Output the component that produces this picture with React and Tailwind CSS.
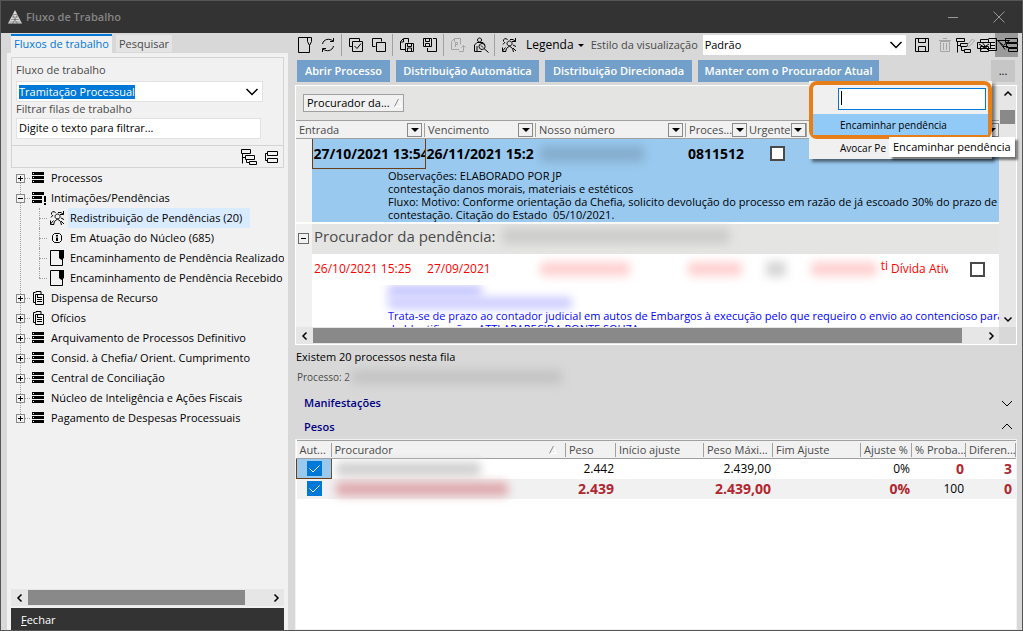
import { useState } from 'react'

const TREE = [
  { label: 'Processos', icon: 'stack' },
  {
    label: 'Intimações/Pendências',
    icon: 'alert',
    open: true,
    children: [
      { label: 'Redistribuição de Pendências (20)', icon: 'people', selected: true },
      { label: 'Em Atuação do Núcleo (685)', icon: 'info' },
      { label: 'Encaminhamento de Pendência Realizado', icon: 'note' },
      { label: 'Encaminhamento de Pendência Recebido', icon: 'note' },
    ],
  },
  { label: 'Dispensa de Recurso', icon: 'docs' },
  { label: 'Ofícios', icon: 'docs' },
  { label: 'Arquivamento de Processos Definitivo', icon: 'stack' },
  { label: 'Consid. à Chefia/ Orient. Cumprimento', icon: 'stack' },
  { label: 'Central de Conciliação', icon: 'stack' },
  { label: 'Núcleo de Inteligência e Ações Fiscais', icon: 'stack' },
  { label: 'Pagamento de Despesas Processuais', icon: 'stack' },
]

const ACTIONS = [
  { label: 'Abrir Processo', width: 'w-[93px]' },
  { label: 'Distribuição Automática', width: 'w-[143px]' },
  { label: 'Distribuição Direcionada', width: 'w-[147px]' },
  { label: 'Manter com o Procurador Atual', width: 'w-[181px]' },
]

// 16x16 glyphs, stroked with the current colour
const GLYPHS = {
  stack: (
    <g fill="currentColor" stroke="none">
      <path d="M2 2h12v3H2zM2 6h12v3H2zM2 10h12v3H2z" />
      <path d="M3 3h1v1H3zM3 7h1v1H3zM3 11h1v1H3z" fill="#f1f1f1" />
    </g>
  ),
  alert: (
    <g fill="currentColor" stroke="none">
      <path d="M2 2h12v3H2zM2 6h10v3H2zM2 10h10v3H2z" />
      <path d="M3 3h1v1H3zM3 7h1v1H3zM3 11h1v1H3z" fill="#f1f1f1" />
      <path d="M14 6h2v6h-2zM14 13h2v2h-2z" />
    </g>
  ),
  people: <path d="M8.500 9a2.500 2.500 0 1 1 .1 0M4.500 15l1-3.500 3-2.500 3 2.500 1 3.500M2 7.500L4 5M2.500 4.500a2 2 0 0 1 4-1.500M9 2.500h3l2.500 2M14.500 1v3.500H11M12 8l3 1.500M1.500 10.500v4H5M1.500 14l3-3.500M12 11l3 3" />,
  info: (
    <>
      <path d="M5.500 3.500h5l2 2v5l-2 2h-5l-2-2v-5z" />
      <path d="M7 5h2v1.500H7zM7 7.500h2V11H7z" fill="currentColor" stroke="none" />
    </>
  ),
  note: (
    <>
      <path d="M1.500.5h12v15h-12z" />
      <path d="M10 0h5v8l-2.500 2L10 8z" fill="currentColor" stroke="none" />
    </>
  ),
  docs: <path d="M5.500 4.500h8v10h-8zM5.500 12.500h-2v-10h2M6 2.500V1.500h5v3M7 7.500h5M7 9.500h5M7 11.500h5M7.500 5v2" />,
  page: <path d="M1.500.5h13v4l-2 4-2-4v-4M1.500.5v15h11v-7" />,
  refresh: <path d="M2.500 7c1-5 7-6 10.500-3M13.500 1v3.500H10M13.500 9c-1 5-7 6-10.500 3M2.500 15v-3.500H6" />,
  checkAll: <path d="M4.500 9.500h-3v-8h10v3M4.500 4.500h10v10h-10zM6.500 9l2.500 2.500L13 6.500" />,
  copy: <path d="M4.500 9.500h-3v-8h9v3M5.500 5.500h9v9h-9z" />,
  docSave: <path d="M6 12.500H1.500v-8l3-3h5v4M4.500 2v3h-3M6.500 6.500h8v8h-8zM8.500 6.500v3h4v-3M8.500 14v-3h4v3" />,
  saveDoc: <path d="M1.500 1.500h8v8h-8zM3.500 1.500v3h4v-3M3.500 9V6.500h4V9M11 1.500h3.500v13h-9V11" />,
  docUp: <path d="M9 12.500H1.500v-8l3-3h6v6M4.500 2v3M5.500 10V5.500h2v2h-2M9 14.500h4.500v-6M11.500 10.500l2-2 2 2" />,
  userSearch: <path d="M6.500 5a2 2 0 1 1 .1 0M1.500 14.500V8L4 5.500h6L12 8M1.500 14.500h7M4 9v5M9 12.500a3 3 0 1 1 .1 0M8 8.500l2 2M11 11.500l4.500 4" />,
  save: <path d="M1.500 1.500h13v13h-13zM4.500 1.500v4h7v-4M4.500 14.500v-5h7v5" />,
  trash: <path d="M3.500 4.500h9v10h-9zM2 3.500h12M6 1.500h4M6.500 6v7M9.500 6v7" />,
  treeEdit: (
    <>
      <path d="M.5 1.500h8v3h-8zM4.500 6.500h7v3h-7zM8.500 12.500h6v3h-6zM1.500 4.500v11M1.500 8.500h3M5.500 9.500v4h3" />
      <path d="M10.500 9l6-7 2 2-6 6z" stroke="#a5a5a5" />
    </>
  ),
  tree: <path d="M.5.500h9v4h-9zM4.500 6.500h9v4h-9zM8.500 12.500h7v3h-7zM1.500 4.500v10M1.500 8.500h3M5.500 10.500v3h3" />,
  boxes: <path d="M4.500 2.500h10v4h-10zM4.500 9.500h10v4h-10zM4 4.500H2.500v7H4" />,
  print: <path d="M1.500 5V2.500h8V5M-1.500 5.500h13v6h-13zM1.500 9.500h8v5h-8zM0 7l10 6M10 7L1 13M3 5l6 8M9.500 1.500h8v12h-8M11 5.500h5M11 8.500h5M11 11.500h5" />,
  window: <path d="M6.500 1.500h12v4h-12zM7.500 6.500h11v4h-11zM9.500 11.500h9v3h-9zM-1.500 3.500h12l-6 5zM1 6l5 6.500M4 9.500h5" />,
  down: <path d="M2.500 5l5.500 5.500L13.500 5" strokeWidth="1.500" />,
  thinDown: <path d="M3 6l5 5 5-5" />,
  thinUp: <path d="M3 10l5-5 5 5" />,
  smallUp: <path d="M4.500 9.500L8 6l3.500 3.500" strokeWidth="1.500" />,
  smallDown: <path d="M4.500 6.500L8 10l3.500-3.500" strokeWidth="1.500" />,
  left: <path d="M9.500 4.500L6 8l3.500 3.500" strokeWidth="1.500" />,
  right: <path d="M6.500 4.500L10 8l-3.500 3.500" strokeWidth="1.500" />,
}

function Icon({ name, className = '' }) {
  return (
    <svg viewBox="0 0 16 16" aria-hidden="true" className={`size-4 shrink-0 overflow-visible fill-none stroke-current ${className}`}>
      {GLYPHS[name]}
    </svg>
  )
}

function ToolButton({ icon, label, className = '' }) {
  return (
    <button aria-label={label} className={`flex h-6 w-[23px] shrink-0 items-center justify-center ${className}`}>
      <Icon name={icon} />
    </button>
  )
}

function Separator() {
  return <span className="mx-0.5 h-[22px] w-px shrink-0 bg-[#a0a0a0]" />
}

function FilterButton({ label }) {
  return (
    <button aria-label={`Filtrar ${label}`} className="flex h-3.5 w-[15px] shrink-0 items-center justify-center border border-[#8a8a8a] bg-[#f1f1f1]">
      <span className="border-x-4 border-t-4 border-x-transparent border-t-black" />
    </button>
  )
}

function SortMark() {
  return (
    <svg viewBox="0 0 8 8" aria-hidden="true" className="size-2 shrink-0 fill-none">
      <path d="M4.500 0l3 7.500h-7" stroke="#fff" />
      <path d="M.5 7.500l4-7.500" stroke="#8a8a8a" />
    </svg>
  )
}

function Expander({ open }) {
  return (
    <button aria-label={open ? 'Recolher' : 'Expandir'} className="relative flex size-[9px] shrink-0 items-center justify-center border border-[#8a8a8a] bg-[#f1f1f1]">
      <span className="h-px w-[5px] bg-black" />
      {!open && <span className="absolute h-[5px] w-px bg-black" />}
    </button>
  )
}

// Text that is hidden from the reader behind a smudge
function Redacted({ className }) {
  return <span aria-hidden="true" className={`block rounded blur-[5px] ${className}`} />
}

function TreeItem({ item }) {
  return (
    <li>
      <div className="flex h-5 items-center whitespace-nowrap">
        <Expander open={item.open} />
        <span className="w-[5px] shrink-0 border-t border-dotted border-[#a0a0a0]" />
        <Icon name={item.icon} />
        <span className="ml-[5px]">{item.label}</span>
      </div>
      {item.children && (
        <ul className="ml-[23px]">
          {item.children.map((child, i) => (
            <li key={child.label} className="relative flex h-5 items-center whitespace-nowrap">
              <span className={`absolute left-0 top-0 w-px border-l border-dotted border-[#a0a0a0] ${i === item.children.length - 1 ? 'h-2.5' : 'h-5'}`} />
              <span className="mr-0.5 w-2 shrink-0 border-t border-dotted border-[#a0a0a0]" />
              <Icon name={child.icon} />
              <span className={`ml-[3px] px-0.5 leading-5 ${child.selected ? 'bg-[#d9ebff] pr-2' : ''}`}>{child.label}</span>
            </li>
          ))}
        </ul>
      )}
    </li>
  )
}

function HorizontalScroll({ thumb }) {
  return (
    <div className="flex h-[17px] shrink-0 items-center bg-[#e6e6e6]">
      <button aria-label="Rolar para a esquerda" className="flex w-[17px] shrink-0 justify-center"><Icon name="left" /></button>
      <div className="flex-1"><div className={`h-[15px] bg-[#898989] ${thumb}`} /></div>
      <button aria-label="Rolar para a direita" className="flex w-[17px] shrink-0 justify-center"><Icon name="right" /></button>
    </div>
  )
}

function TitleBar() {
  return (
    <header className="flex h-8 shrink-0 items-center bg-[#333] text-[#858585]">
      <svg viewBox="0 0 14 14" aria-hidden="true" className="ml-[7px] size-3.5">
        <path d="M7 0l7 13.500H0z" fill="#d8d8d8" />
        <path d="M5 4.500h4M4 7h6M3 9.500h8M1.500 12h11M4.500 5l5 9M9.500 5l-5 9" stroke="#333" strokeWidth=".4" fill="none" />
      </svg>
      <h1 className="ml-1 flex-1 font-semibold">Fluxo de Trabalho</h1>
      <button aria-label="Minimizar" className="flex h-8 w-[46px] items-center justify-center"><span className="h-px w-2.5 bg-[#999]" /></button>
      <button aria-label="Fechar janela" className="flex h-8 w-[46px] items-center justify-center">
        <svg viewBox="0 0 12 12" className="size-3 stroke-[#999]"><path d="M.5.500l11 11M11.500.500l-11 11" /></svg>
      </button>
    </header>
  )
}

function Sidebar() {
  return (
    <aside className="ml-1.5 flex w-[281px] shrink-0 flex-col pt-px">
      <div className="flex items-end gap-1 pl-1 text-[#4a4a4a]">
        <button className="h-[19px] w-[101px] whitespace-nowrap border-t-2 border-[#0078d7] bg-[#f1f1f1] pb-0.5 leading-[14px] text-[#0078d7]">Fluxos de trabalho</button>
        <button className="mb-px h-[17px] w-14 bg-[#e4e4e4] leading-[17px]">Pesquisar</button>
      </div>
      <div className="flex min-h-0 flex-1 flex-col bg-[#f1f1f1] px-1 pt-1">
        <div className="flex flex-col border border-[#d4d4d4] pb-1.5 pl-1 pr-5 pt-1 text-[#4a4a4a]">
          <label htmlFor="fluxo" className="leading-4">Fluxo de trabalho</label>
          <div className="relative mt-[3px] h-[21px] border border-[#e2e2e2] bg-white">
            <select id="fluxo" className="absolute inset-0 w-full appearance-none opacity-0">
              <option>Tramitação Processual</option>
            </select>
            <div className="pointer-events-none flex h-full items-center justify-between px-0.5">
              <span className="bg-[#0078d7] leading-[14px] text-white">Tramitação Processual</span>
              <Icon name="down" className="text-black" />
            </div>
          </div>
          <label htmlFor="filtro" className="mb-0.5 leading-[14px]">Filtrar filas de trabalho</label>
          <input id="filtro" defaultValue="Digite o texto para filtrar..." className="mr-0.5 h-[21px] border border-[#e2e2e2] bg-white px-0.5 pb-0.5 text-black" />
        </div>
        <div className="flex h-[22px] items-center justify-end gap-1.5 border border-t-0 border-[#d4d4d4] pr-1">
          <button aria-label="Expandir filas"><Icon name="tree" /></button>
          <button aria-label="Recolher filas"><Icon name="boxes" /></button>
        </div>
        <nav className="min-h-0 flex-1 overflow-hidden pl-[5px]">
          <ul className="relative">
            <li aria-hidden="true" className="absolute bottom-2.5 left-1 top-2.5 border-l border-dotted border-[#a0a0a0]" />
            {TREE.map(item => <TreeItem key={item.label} item={item} />)}
          </ul>
        </nav>
        <HorizontalScroll thumb="w-[91%]" />
        <button className="mt-0.5 h-[22px] shrink-0 bg-[#333] px-2.5 pt-0.5 text-left font-medium text-white"><u>F</u>echar</button>
      </div>
    </aside>
  )
}

function Toolbar() {
  return (
    <div className="-ml-0.5 -mr-px flex h-6 shrink-0 items-center">
      <ToolButton icon="page" label="Novo" />
      <ToolButton icon="refresh" label="Atualizar" />
      <Separator />
      <ToolButton icon="checkAll" label="Marcar todos" />
      <ToolButton icon="copy" label="Desmarcar todos" />
      <Separator />
      <ToolButton icon="docSave" label="Salvar documento" />
      <ToolButton icon="saveDoc" label="Exportar" />
      <Separator />
      <ToolButton icon="docUp" label="Enviar" className="text-[#a5a5a5]" />
      <ToolButton icon="userSearch" label="Localizar procurador" />
      <Separator />
      <ToolButton icon="people" label="Redistribuir" />
      <button className="ml-1.5 flex shrink-0 items-center gap-1 text-[12px]">
        Legenda
        <span className="border-x-[3px] border-t-[3px] border-x-transparent border-t-black" />
      </button>
      <label htmlFor="estilo" className="ml-[7px] w-[111px] shrink-0 whitespace-nowrap text-[#4a4a4a]">Estilo da visualização</label>
      <div className="relative ml-px h-5 flex-1 bg-white">
        <select id="estilo" className="h-5 w-full appearance-none px-0.5">
          <option>Padrão</option>
        </select>
        <Icon name="down" className="pointer-events-none absolute right-0.5 top-0.5" />
      </div>
      <ToolButton icon="save" label="Salvar estilo" className="ml-1" />
      <ToolButton icon="trash" label="Excluir estilo" className="text-[#a5a5a5]" />
      <ToolButton icon="treeEdit" label="Editar estilo" className="-ml-1" />
      <ToolButton icon="print" label="Imprimir" className="z-10" />
      <ToolButton icon="window" label="Visualizar" className="-ml-[3px] bg-[#9a9a9a]" />
    </div>
  )
}

function ActionMenu() {
  return (
    <div className="absolute right-6 top-[-5px] z-10 w-[183px] bg-[#f0f0f0] pb-0.5 shadow-[3px_3px_3px_rgba(0,0,0,0.5)]">
      <div className="relative rounded-lg border-4 border-[#e67e1a]">
        <input aria-label="Procurar ação" className="ml-[25px] mt-[3px] block h-[22px] w-[148px] border border-[#0078d7] bg-white px-0.5 caret-transparent outline-none" />
        <span aria-hidden="true" className="absolute left-7 top-1.5 h-3.5 w-px bg-black" />
        <button className="mt-1 block h-[21px] w-full bg-[#91c9f7] pl-[27px] text-left text-[10px]">Encaminhar pendência</button>
      </div>
      <button className="block h-[18px] w-full pl-[31px] text-left text-[10px]">Avocar Pe</button>
      <div role="tooltip" className="absolute left-[80px] top-[56px] whitespace-nowrap bg-white px-1 leading-5 shadow-[3px_3px_2px_rgba(0,0,0,0.5)]">
        Encaminhar pendência
      </div>
    </div>
  )
}

function HeadCell({ label, span, last }) {
  return (
    <th colSpan={span} className="h-[18px] border-y border-[#a0a0a0] p-0 font-normal">
      <div className={`flex h-3.5 items-center justify-between pl-[3px] ${last ? '' : 'border-r border-[#a0a0a0] pr-0.5'}`}>
        <span className="whitespace-nowrap">{label}</span>
        <FilterButton label={label || 'coluna'} />
      </div>
    </th>
  )
}

function PendingGrid() {
  const [urgent, setUrgent] = useState(false)
  const box = 'block size-[15px] appearance-none border-2 border-[#4a4a4a] bg-white'

  return (
    <section className="relative mt-[3px] shrink-0 border border-white bg-[#f1f1f1]">
      <div className="flex">
        <div className="h-[241px] min-w-0 flex-1 overflow-hidden">
          <div className="flex h-[34px] items-center bg-[#e4e4e2] pl-[7px]">
            <button className="flex h-[18px] w-[101px] items-center gap-1 whitespace-nowrap border border-[#a0a0a0] bg-[#f1f1f1] px-[3px]">
              Procurador da... <SortMark />
            </button>
          </div>
          <table className="w-full table-fixed border-collapse text-left">
            <colgroup>
              <col className="w-4" />
              <col className="w-[113px]" />
              <col className="w-[111px]" />
              <col className="w-[150px]" />
              <col className="w-[60px]" />
              <col className="w-[61px]" />
              <col className="w-[81px]" />
              <col className="w-[62px]" />
              <col />
            </colgroup>
            <thead className="text-[#4a4a4a]">
              <tr>
                <HeadCell label="Entrada" span={2} />
                <HeadCell label="Vencimento" />
                <HeadCell label="Nosso número" />
                <HeadCell label="Proces..." />
                <HeadCell label="Urgente" />
                <HeadCell label="" />
                <HeadCell label="" />
                <HeadCell label="" last />
              </tr>
            </thead>
            <tbody>
              <tr className="h-[30px] bg-[#99c9ef] text-[14px] font-bold">
                <td className="bg-[#f1f1f1]" />
                <td className="overflow-hidden whitespace-nowrap border border-[#6b3e1a] p-0 pl-px">27/10/2021 13:54</td>
                <td className="overflow-hidden whitespace-nowrap p-0 pl-px">26/11/2021 15:2</td>
                <td className="p-0"><Redacted className="ml-1 h-4 w-[104px] bg-[#85adcd]" /></td>
                <td className="overflow-hidden p-0 pl-0.5">0811512</td>
                <td className="p-0 pl-6"><input type="checkbox" aria-label="Urgente" className={box} /></td>
                <td colSpan={3} />
              </tr>
              <tr className="bg-[#99c9ef]">
                <td className="bg-[#f1f1f1]" />
                <td colSpan={8} className="h-[54px] overflow-hidden whitespace-pre p-0 pl-[76px] align-top leading-[13px]">
                  {'Observações: ELABORADO POR JP\ncontestação danos morais, materiais e estéticos\nFluxo: Motivo: Conforme orientação da Chefia, solicito devolução do processo em razão de já escoado 30% do prazo de\ncontestação. Citação do Estado  05/10/2021.'}
                </td>
              </tr>
              <tr className="border-t-2 border-white bg-[#e4e4e2] text-[15px] text-[#4a4a4a]">
                <td className="bg-[#f1f1f1] p-0 pl-0.5">
                  <button aria-label="Recolher grupo" className="flex size-[11px] items-center justify-center border border-[#6a6a6a]"><span className="h-px w-[5px] bg-black" /></button>
                </td>
                <td colSpan={8} className="h-[31px] p-0 align-top">
                  <div className="flex h-6 items-center gap-1.5 pl-0.5">
                    Procurador da pendência: <Redacted className="h-4 w-[228px] bg-[#cdcdcb]" />
                  </div>
                </td>
              </tr>
              <tr className="h-[31px] bg-white text-[12px] text-[#f00]">
                <td className="bg-[#f1f1f1]" />
                <td className="whitespace-nowrap p-0 pl-0.5">26/10/2021 15:25</td>
                <td className="p-0 pl-0.5">27/09/2021</td>
                <td className="p-0"><Redacted className="ml-1 h-3.5 w-[90px] bg-[#ffd0d0]" /></td>
                <td className="p-0"><Redacted className="ml-0.5 h-3.5 w-[54px] bg-[#ffd0d0]" /></td>
                <td className="p-0"><Redacted className="ml-5 h-4 w-5 bg-[#d6d6d6]" /></td>
                <td className="p-0"><div className="flex justify-between"><Redacted className="ml-1 h-3.5 w-[66px] bg-[#ffd0d0]" /><span className="leading-2">ti</span></div></td>
                <td className="overflow-hidden whitespace-nowrap p-0 pl-[3px]"><div className="w-[57px] overflow-hidden">Dívida Ativa</div></td>
                <td className="p-0 pl-5"><input type="checkbox" aria-label="Selecionar" className={box} checked={urgent} onChange={e => setUrgent(e.target.checked)} /></td>
              </tr>
              <tr className="bg-white text-[#00f]">
                <td className="bg-[#f1f1f1]" />
                <td colSpan={8} className="h-[60px] overflow-hidden whitespace-nowrap p-0 pl-[76px] align-top leading-[13px]">
                  <Redacted className="h-3 w-[94px] bg-[#c4c4ff]" />
                  <Redacted className="h-3 w-[184px] bg-[#ccccff]" />
                  <p>Trata-se de prazo ao contador judicial em autos de Embargos à execução pelo que requeiro o envio ao contencioso para</p>
                  <p>da Identificação - ATTI APARECIDA PONTE SOUZA</p>
                </td>
              </tr>
            </tbody>
          </table>
        </div>
        <div className="flex w-[17px] shrink-0 flex-col items-center bg-[#e6e6e6]">
          <button aria-label="Rolar para cima" className="flex h-6 items-start"><Icon name="smallUp" /></button>
          <div className="h-3.5 w-[15px] bg-[#898989]" />
          <button aria-label="Rolar para baixo" className="mt-auto"><Icon name="smallDown" /></button>
        </div>
      </div>
      <div className="flex">
        <div className="flex-1"><HorizontalScroll thumb="w-[97%]" /></div>
        <span className="w-[17px] bg-[#d8d8d8]" />
      </div>
      <ActionMenu />
    </section>
  )
}

function WeightsTable() {
  const th = 'h-[18px] border-y border-[#a0a0a0] p-0 font-normal'
  const thInner = 'overflow-hidden whitespace-nowrap border-r border-[#a0a0a0] pl-[3px] leading-[14px]'
  const red = 'text-[14px] font-bold text-[#b0272f]'
  return (
    <div className="min-h-0 flex-1 border border-[#f1f1f1] bg-white">
      <table className="w-full table-fixed border-collapse">
        <colgroup>
          <col className="w-[35px]" />
          <col />
          <col className="w-[50px]" />
          <col className="w-[88px]" />
          <col className="w-[69px]" />
          <col className="w-[88px]" />
          <col className="w-[51px]" />
          <col className="w-[54px]" />
          <col className="w-[50px]" />
        </colgroup>
        <thead className="bg-[#f1f1f1] text-left text-[#4a4a4a]">
          <tr>
            <th className={th}><div className={thInner}>Aut...</div></th>
            <th className={th}><div className={`${thInner} flex items-center justify-between pr-2`}>Procurador <SortMark /></div></th>
            <th className={th}><div className={thInner}>Peso</div></th>
            <th className={th}><div className={thInner}>Início ajuste</div></th>
            <th className={th}><div className={thInner}>Peso Máxi...</div></th>
            <th className={th}><div className={thInner}>Fim Ajuste</div></th>
            <th className={th}><div className={thInner}>Ajuste %</div></th>
            <th className={th}><div className={thInner}>% Proba...</div></th>
            <th className={th}><div className={thInner}>Diferen...</div></th>
          </tr>
        </thead>
        <tbody className="text-right text-[12px]">
          <tr className="h-5">
            <td className="border border-[#6b3e1a] bg-[#99c9ef] p-0"><Tick /></td>
            <td className="p-0"><Redacted className="ml-1 h-3.5 w-[145px] bg-[#d0d0d0]" /></td>
            <td className="p-0 pr-0.5">2.442</td>
            <td />
            <td className="p-0 pr-0.5">2.439,00</td>
            <td />
            <td className="p-0 pr-0.5">0%</td>
            <td className={`p-0 pr-0.5 ${red}`}>0</td>
            <td className={`p-0 pr-1 ${red}`}>3</td>
          </tr>
          <tr className={`h-5 bg-[#f1f1f1] leading-5 ${red}`}>
            <td className="p-0"><Tick /></td>
            <td className="p-0"><Redacted className="ml-1 h-3.5 w-[172px] bg-[#dfa9ad]" /></td>
            <td className="p-0 pr-0.5">2.439</td>
            <td />
            <td className="p-0 pr-0.5">2.439,00</td>
            <td />
            <td className="p-0 pr-0.5">0%</td>
            <td className="p-0 pr-0.5 text-[12px] font-normal text-black">100</td>
            <td className="p-0 pr-1">0</td>
          </tr>
        </tbody>
      </table>
    </div>
  )
}

function Tick() {
  const [on, setOn] = useState(true)
  return (
    <label className="relative mx-auto block size-[15px] bg-[#0078d7]">
      <input type="checkbox" aria-label="Automático" checked={on} onChange={() => setOn(!on)} className="absolute inset-0 appearance-none" />
      {on && <svg viewBox="0 0 15 15" className="pointer-events-none block size-[15px] fill-none stroke-white"><path d="M2.500 7.500l3.500 3.500 6.500-6.500" /></svg>}
    </label>
  )
}

function SectionHead({ label, open }) {
  return (
    <button className="flex h-6 shrink-0 items-center justify-between pl-[9px] pr-0.5 font-semibold text-[#000080]">
      {label}
      <Icon name={open ? 'thinUp' : 'thinDown'} className="text-black" />
    </button>
  )
}

export default function App() {
  return (
    <div className="flex h-screen flex-col overflow-hidden border border-[#555] bg-[#d8d8d8] font-['Open_Sans','Noto_Sans',sans-serif] text-[11px] leading-4 text-black">
      <TitleBar />
      <div className="flex min-h-0 flex-1">
        <Sidebar />
        <main className="ml-[7px] mr-[5px] flex min-w-0 flex-1 flex-col">
          <Toolbar />
          <div className="mt-[3px] flex shrink-0 gap-1.5 pl-0.5 pr-0.5">
            {ACTIONS.map(a => (
              <button key={a.label} className={`h-[22px] whitespace-nowrap bg-[#739fcb] text-center font-semibold text-white ${a.width}`}>
                {a.label}
              </button>
            ))}
            <button aria-label="Mais ações" className="ml-auto h-[22px] w-6 bg-[#c6c6c6]">...</button>
          </div>
          <PendingGrid />
          <p className="mt-0.5 h-5 shrink-0 pl-px leading-5">Existem 20 processos nesta fila</p>
          <div className="flex h-6 shrink-0 items-center gap-0.5 pb-1 pl-0.5 text-[10px] text-[#4a4a4a]">
            Processo: 2 <Redacted className="h-3.5 w-[210px] bg-[#c4c4c4]" />
          </div>
          <SectionHead label="Manifestações" />
          <SectionHead label="Pesos" open />
          <WeightsTable />
        </main>
      </div>
    </div>
  )
}
